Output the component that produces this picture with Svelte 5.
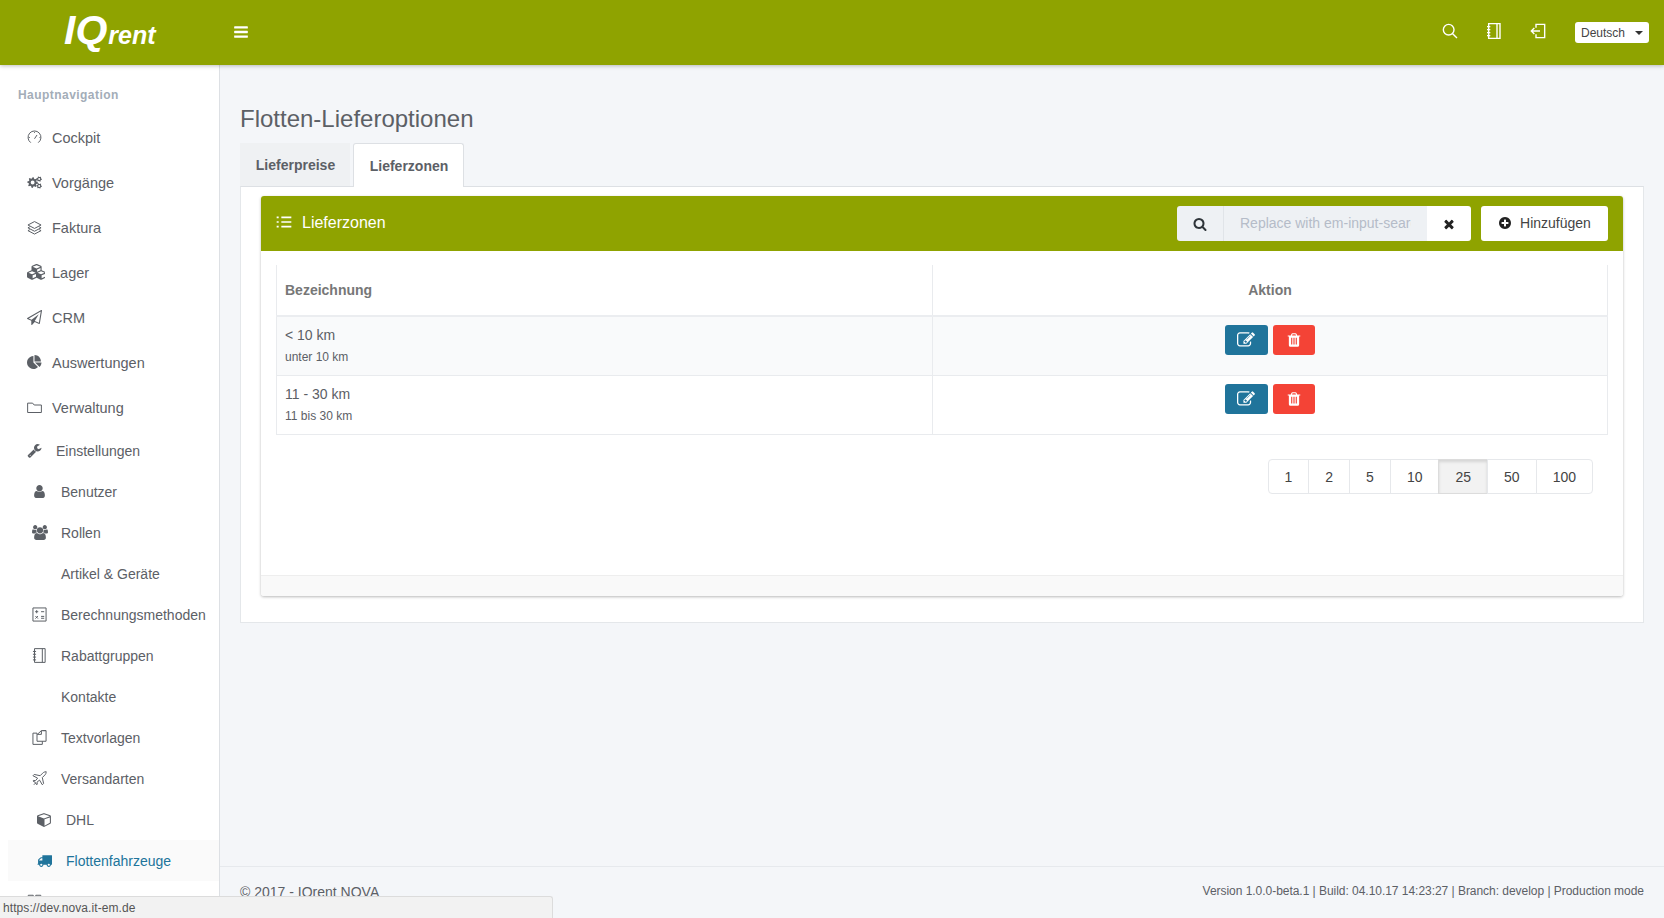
<script>
  // builds a small cog as one path, the hole is cut with evenodd
  function gear(cx, cy, r, teeth) {
    let d = ''
    const step = (Math.PI * 2) / (teeth * 4)
    for (let i = 0; i < teeth * 4; i++) {
      const rad = i % 4 < 2 ? r : r * 0.74
      const x = cx + Math.cos(i * step) * rad
      const y = cy + Math.sin(i * step) * rad
      d += (i ? 'L' : 'M') + x.toFixed(2) + ' ' + y.toFixed(2)
    }
    const h = r * 0.36
    return `${d}Z M${cx - h} ${cy}a${h} ${h} 0 1 0 ${h * 2} 0a${h} ${h} 0 1 0 ${-h * 2} 0Z`
  }

  const fa = 1792
  const icons = {
    speedo: { vb: 24, line: true, d: 'M6 20.2A10.3 10.3 0 1 1 18 20.2M12 14l4-6M3 12h1.500M20 12h1M12 3v1.500' },
    gears: { vb: 24, d: gear(9, 12, 8.6, 8) + gear(19.5, 6.5, 4.4, 6) + gear(19.5, 17.5, 4.4, 6) },
    layers: { vb: 24, line: true, d: 'M12 2.500 22.500 8 12 13.500 1.500 8ZM4.500 11 1.500 12.500 12 18 22.500 12.500 19.500 11M4.500 15.500 1.500 17 12 22.500 22.500 17 19.500 15.500' },
    cubes: { vb: 2048, d: 'M640 1632l384-192v-314l-384 164v342zm-64-454l404-173-404-173-404 173zm1088 454l384-192v-314l-384 164v342zm-64-454l404-173-404-173-404 173zm-448-293l384-165v-266l-384 164v267zm-64-379l441-189-441-189-441 189zm1088 518v416q0 36-19 67t-52 47l-448 224q-25 14-57 14t-57-14l-448-224q-4-2-7-4-2 2-7 4l-448 224q-25 14-57 14t-57-14l-448-224q-33-16-52-47t-19-67v-416q0-38 21.500-70t56.500-48l434-186v-400q0-38 21.500-70t56.500-48l448-192q23-10 50-10t50 10l448 192q35 16 56.500 48t21.500 70v400l434 186q36 16 57 48t21 70z' },
    plane: { vb: fa, d: 'M1764 11q33 24 27 64l-256 1536q-5 29-32 45-14 8-31 8-11 0-24-5l-527-215-298 327q-18 21-47 21-14 0-23-4-19-7-30-23.500t-11-36.500v-452l-472-193q-37-14-40-55-3-39 32-59l1664-960q35-21 68 2zm-342 1499l221-1323-1434 827 336 137 863-639-478 797z' },
    pie: { vb: fa, d: 'M768 890l546 546q-106 108-247.500 168t-298.500 60q-209 0-385.500-103t-279.500-279.500-103-385.500 103-385.500 279.500-279.500 385.500-103v762zm187 6h773q0 157-60 298.500t-168 247.500zm709-128h-768v-768q209 0 385.500 103t279.500 279.500 103 385.500z' },
    folder: { vb: 24, line: true, d: 'M1 20V5h8l2.500 3H23v12Z' },
    wrench: { vb: fa, d: 'M448 1472q0-26-19-45t-45-19-45 19-19 45 19 45 45 19 45-19 19-45zm644-420l-682 682q-37 37-90 37-52 0-91-37l-106-108q-38-36-38-90 0-53 38-91l681-681q39 98 114.500 173.500t173.500 114.500zm634-435q0 39-23 106-47 134-164.500 217.500t-258.500 83.500q-185 0-316.500-131.500t-131.500-316.500 131.500-316.500 316.500-131.500q58 0 121.500 16.500t107.500 46.500q16 11 16 28t-16 28l-293 169v224l193 107q5-3 79-48.500t135.500-81 70.500-35.500q15 0 23.500 10t8.500 25z' },
    user: { vb: fa, d: 'M1536 1399q0 109-62.500 187t-150.500 78h-854q-88 0-150.500-78t-62.500-187q0-85 8.500-160.500t31.500-152 58.500-131 94-89 134.500-34.500q131 128 313 128t313-128q76 0 134.500 34.500t94 89 58.500 131 31.500 152 8.500 160.500zm-256-887q0 159-112.500 271.500t-271.500 112.500-271.500-112.500-112.500-271.500 112.500-271.500 271.500-112.500 271.500 112.500 112.500 271.500z' },
    users: { vb: 1920, d: 'M593 896q-162 5-265 128h-134q-82 0-138-40.500t-56-118.500q0-353 124-353 6 0 43.500 21t97.500 42.500 119 21.500q67 0 133-23-5 37-5 66 0 139 81 256zm1071 637q0 120-73 189.500t-194 69.500h-874q-121 0-194-69.500t-73-189.500q0-53 3.500-103.500t14-109 26.500-108.500 43-97.500 62-81 85.500-53.500 111.500-20q10 0 43 21.500t73 48 107 48 135 21.500 135-21.500 107-48 73-48 43-21.500q61 0 111.500 20t85.500 53.500 62 81 43 97.500 26.500 108.500 14 109 3.500 103.500zm-1024-1277q0 106-75 181t-181 75-181-75-75-181 75-181 181-75 181 75 75 181zm704 384q0 159-112.500 271.500t-271.500 112.500-271.500-112.500-112.500-271.500 112.500-271.500 271.500-112.500 271.500 112.500 112.500 271.500zm576 225q0 78-56 118.500t-138 40.500h-134q-103-123-265-128 81-117 81-256 0-29-5-66 66 23 133 23 59 0 119-21.500t97.500-42.500 43.500-21q124 0 124 353zm-128-609q0 106-75 181t-181 75-181-75-75-181 75-181 181-75 181 75 75 181z' },
    calc: { vb: 24, line: true, d: 'M1.500 1.500h21v21h-21ZM5 7.500h5M7.500 5v5M14.500 7.500h5M5.500 14.500l4 4M9.500 14.500l-4 4M14.500 15h5M14.500 18h5' },
    notebook: { vb: 24, line: true, d: 'M4 1h17v22H4ZM16.500 1v22M1.500 5.500h5M1.500 10h5M1.500 14.500h5M1.500 19h5' },
    docs: { vb: 24, line: true, d: 'M8 5H1.500v18h15v-5M8 5v13h14.500V1H15M15 1v6H8.500L15 1M17 1h5.500' },
    jet: { vb: 24, line: true, d: 'M22.500 1.500c-2-.5-4 .5-5.500 2L13 7.500 3.500 5.500 1.500 7.500 9 11.500 5.500 15.500 2.500 15 1.500 16 5 18 7.500 22 8.500 21 8 18l4-3.500 4.500 7.500 2-2-2-9.500 4-4c1.500-1.500 2.500-3.500 2-5.500ZM3 22l3-3' },
    cube: { vb: fa, d: 'M896 1629l640-349v-636l-640 233v752zm-64-865l698-254-698-254-698 254zm832-252v768q0 35-18 65t-49 47l-704 384q-28 16-61 16t-61-16l-704-384q-31-17-49-47t-18-65v-768q0-40 23-73t61-47l704-256q22-8 44-8t44 8l704 256q38 14 61 47t23 73z' },
    truck: { vb: fa, d: 'M640 1408q0-52-38-90t-90-38-90 38-38 90 38 90 90 38 90-38 38-90zm-384-512h384v-256h-158q-13 0-22 9l-195 195q-9 9-9 22v30zm1280 512q0-52-38-90t-90-38-90 38-38 90 38 90 90 38 90-38 38-90zm256-1088v1024q0 15-4 26.500t-13.500 18.500-16.500 11.500-23.500 6-22.500 2-25.500 0-22.500-.5q0 106-75 181t-181 75-181-75-75-181h-384q0 106-75 181t-181 75-181-75-75-181h-64q-3 0-22.500.5t-25.500 0-22.500-2-23.500-6-16.500-11.500-13.500-18.500-4-26.500q0-26 19-45t45-19v-320q0-8-.5-35t0-38 2.500-34.500 6.500-37 14-30.500 22.500-30l198-198q19-19 50.500-32t58.500-13h160v-192q0-26 19-45t45-19h1024q26 0 45 19t19 45z' },
    grid: { vb: 24, line: true, d: 'M2 2h8v8H2ZM14 2h8v8h-8ZM2 14h8v8H2ZM14 14h8v8h-8Z' },
    bars: { vb: fa, d: 'M1664 1344v128q0 26-19 45t-45 19h-1408q-26 0-45-19t-19-45v-128q0-26 19-45t45-19h1408q26 0 45 19t19 45zm0-512v128q0 26-19 45t-45 19h-1408q-26 0-45-19t-19-45v-128q0-26 19-45t45-19h1408q26 0 45 19t19 45zm0-512v128q0 26-19 45t-45 19h-1408q-26 0-45-19t-19-45v-128q0-26 19-45t45-19h1408q26 0 45 19t19 45z' },
    magnifier: { vb: 24, line: true, d: 'M16 16l6.500 6.500M18 10A8 8 0 1 1 2 10a8 8 0 1 1 16 0Z' },
    logout: { vb: 24, line: true, d: 'M9 7V2h13v20H9v-5M15 12H2M6.500 7.500 2 12l4.500 4.500' },
    list: { vb: 24, line: true, d: 'M8 5h15M8 12h15M8 19h15M1 5h3M1 12h3M1 19h3' },
    search: { vb: fa, d: 'M1216 832q0-185-131.500-316.500t-316.500-131.500-316.500 131.500-131.500 316.500 131.500 316.500 316.500 131.500 316.500-131.500 131.500-316.500zm512 832q0 52-38 90t-90 38q-54 0-90-38l-343-342q-179 124-399 124-143 0-273.500-55.500t-225-150-150-225-55.500-273.500 55.500-273.500 150-225 225-150 273.500-55.500 273.500 55.500 225 150 150 225 55.500 273.500q0 220-124 399l343 343q37 37 37 90z' },
    times: { vb: fa, d: 'M1490 1322q0 40-28 68l-136 136q-28 28-68 28t-68-28l-294-294-294 294q-28 28-68 28t-68-28l-136-136q-28-28-28-68t28-68l294-294-294-294q-28-28-28-68t28-68l136-136q28-28 68-28t68 28l294 294 294-294q28-28 68-28t68 28l136 136q28 28 28 68t-28 68l-294 294 294 294q28 28 28 68z' },
    plus: { vb: fa, d: 'M1344 960v-128q0-26-19-45t-45-19h-256v-256q0-26-19-45t-45-19h-128q-26 0-45 19t-19 45v256h-256q-26 0-45 19t-19 45v128q0 26 19 45t45 19h256v256q0 26 19 45t45 19h128q26 0 45-19t19-45v-256h256q26 0 45-19t19-45zm320-64q0 209-103 385.500t-279.500 279.500-385.500 103-385.500-103-279.500-279.500-103-385.500 103-385.500 279.500-279.500 385.500-103 385.500 103 279.500 279.500 103 385.500z' },
    edit: { vb: fa, d: 'M888 1184l116-116-152-152-116 116v56h96v96h56zm440-720q-16-16-33 1l-350 350q-17 17-1 33t33-1l350-350q17-17 1-33zm80 594v190q0 119-84.500 203.500t-203.500 84.500h-832q-119 0-203.500-84.500t-84.500-203.500v-832q0-119 84.500-203.500t203.500-84.500h832q63 0 117 25 15 7 18 23 3 17-9 29l-49 49q-14 14-32 8-23-6-45-6h-832q-66 0-113 47t-47 113v832q0 66 47 113t113 47h832q66 0 113-47t47-113v-126q0-13 9-22l64-64q15-15 35-7t20 29zm-96-738l288 288-672 672h-288v-288zm444 132l-92 92-288-288 92-92q28-28 68-28t68 28l152 152q28 28 28 68t-28 68z' },
    trash: { vb: fa, d: 'M704 1376v-704q0-14-9-23t-23-9h-64q-14 0-23 9t-9 23v704q0 14 9 23t23 9h64q14 0 23-9t9-23zm256 0v-704q0-14-9-23t-23-9h-64q-14 0-23 9t-9 23v704q0 14 9 23t23 9h64q14 0 23-9t9-23zm256 0v-704q0-14-9-23t-23-9h-64q-14 0-23 9t-9 23v704q0 14 9 23t23 9h64q14 0 23-9t9-23zm-544-992h448l-48-117q-7-9-17-11h-317q-10 2-17 11zm928 32v64q0 14-9 23t-23 9h-96v948q0 83-47 143.500t-113 60.500h-832q-66 0-113-58.500t-47-141.500v-952h-96q-14 0-23-9t-9-23v-64q0-14 9-23t23-9h309l70-167q15-37 54-63t79-26h320q40 0 79 26t54 63l70 167h309q14 0 23 9t9 23z' }
  }

  const nav = [
    { label: 'Cockpit', icon: 'speedo', level: 'top' },
    { label: 'Vorgänge', icon: 'gears', level: 'top' },
    { label: 'Faktura', icon: 'layers', level: 'top' },
    { label: 'Lager', icon: 'cubes', level: 'top', size: 18 },
    { label: 'CRM', icon: 'plane', level: 'top' },
    { label: 'Auswertungen', icon: 'pie', level: 'top' },
    { label: 'Verwaltung', icon: 'folder', level: 'top' },
    { label: 'Einstellungen', icon: 'wrench', level: 'one' },
    { label: 'Benutzer', icon: 'user', level: 'two' },
    { label: 'Rollen', icon: 'users', level: 'two', size: 16 },
    { label: 'Artikel & Geräte', level: 'two' },
    { label: 'Berechnungsmethoden', icon: 'calc', level: 'two' },
    { label: 'Rabattgruppen', icon: 'notebook', level: 'two' },
    { label: 'Kontakte', level: 'two' },
    { label: 'Textvorlagen', icon: 'docs', level: 'two' },
    { label: 'Versandarten', icon: 'jet', level: 'two' },
    { label: 'DHL', icon: 'cube', level: 'three' },
    { label: 'Flottenfahrzeuge', icon: 'truck', level: 'three', active: true },
    { label: '', icon: 'grid', level: 'one' }
  ]

  const zones = [
    { name: '< 10 km', note: 'unter 10 km' },
    { name: '11 - 30 km', note: '11 bis 30 km' }
  ]

  const pages = [1, 2, 5, 10, 25, 50, 100]
  let pageSize = $state(25)
  let tab = $state('Lieferzonen')
</script>

{#snippet icon(name, size)}
  <svg
    class="icon"
    class:line={icons[name].line}
    width={size}
    height={size}
    viewBox="0 0 {icons[name].vb} {icons[name].vb}"
    aria-hidden="true"
  >
    <path d={icons[name].d} fill-rule="evenodd" />
  </svg>
{/snippet}

<div class="app">
  <header class="topbar">
    <div class="logo"><span class="logo-iq">IQ</span><span class="logo-rent">rent</span></div>
    <button class="burger">{@render icon('bars', 16)}</button>
    <div class="top-actions">
      <button class="top-btn">{@render icon('magnifier', 16)}</button>
      <button class="top-btn">{@render icon('notebook', 16)}</button>
      <button class="top-btn">{@render icon('logout', 16)}</button>
      <div class="lang">Deutsch<span class="caret"></span></div>
    </div>
  </header>

  <div class="below">
    <aside class="sidebar">
      <div class="nav-title">Hauptnavigation</div>
      {#each nav as item}
        <div class="nav-item {item.level}" class:active={item.active}>
          <span class="nav-icon">
            {#if item.icon}{@render icon(item.icon, item.size ?? 15)}{/if}
          </span>
          <span>{item.label}</span>
        </div>
      {/each}
    </aside>

    <main class="main">
      <div class="content">
        <h1>Flotten-Lieferoptionen</h1>

        <div class="tabs">
          {#each ['Lieferpreise', 'Lieferzonen'] as name}
            <button class="tab" class:current={tab === name} onclick={() => (tab = name)}>{name}</button>
          {/each}
        </div>

        <div class="pane">
          <section class="panel">
            <div class="panel-head">
              <div class="panel-title">{@render icon('list', 16)}<span>Lieferzonen</span></div>
              <div class="search">
                <span class="addon">{@render icon('search', 14)}</span>
                <input placeholder="Replace with em-input-search" />
                <button class="clear">{@render icon('times', 14)}</button>
              </div>
              <button class="add">{@render icon('plus', 14)}<span>Hinzufügen</span></button>
            </div>

            <div class="panel-body">
              <table>
                <thead>
                  <tr>
                    <th class="name">Bezeichnung</th>
                    <th>Aktion</th>
                  </tr>
                </thead>
                <tbody>
                  {#each zones as zone}
                    <tr>
                      <td>
                        <div class="zone-name">{zone.name}</div>
                        <small>{zone.note}</small>
                      </td>
                      <td class="actions">
                        <button class="act edit">{@render icon('edit', 18)}</button>
                        <button class="act del">{@render icon('trash', 16)}</button>
                      </td>
                    </tr>
                  {/each}
                </tbody>
              </table>

              <div class="pager">
                {#each pages as p}
                  <button class:on={p === pageSize} onclick={() => (pageSize = p)}>{p}</button>
                {/each}
              </div>
            </div>

            <div class="panel-foot"></div>
          </section>
        </div>
      </div>

      <footer class="footer">
        <span>© 2017 - IQrent NOVA</span>
        <span class="version">Version 1.0.0-beta.1 | Build: 04.10.17 14:23:27 | Branch: develop | Production mode</span>
      </footer>
    </main>
  </div>

  <div class="status">https://dev.nova.it-em.de</div>
</div>

<style>
  :global(body) {
    margin: 0;
    background: #f4f6f9;
    font-family: 'Liberation Sans', Arial, sans-serif;
    color: #5c6066;
    overflow: hidden;
  }

  button {
    font: inherit;
    cursor: pointer;
  }

  .app {
    position: relative;
    height: 918px;
    overflow: hidden;
  }

  .icon {
    display: block;
    fill: currentColor;
    flex: none;
  }

  .icon.line {
    fill: none;
    stroke: currentColor;
    stroke-width: 1.6;
  }

  .topbar {
    position: relative;
    z-index: 2;
    height: 65px;
    display: flex;
    align-items: center;
    background: #8fa300;
    box-shadow: 0 1px 4px rgba(0, 0, 0, 0.25);
    color: #fff;
  }

  .logo {
    width: 233px;
    box-sizing: border-box;
    padding: 3px 0 0 64px;
    font-style: italic;
    color: #fff;
    white-space: nowrap;
    line-height: 40px;
  }

  .logo-iq {
    font-size: 41px;
    font-weight: 700;
  }

  .logo-rent {
    font-size: 25px;
    font-weight: 700;
    margin-left: 1px;
  }

  .burger,
  .top-btn {
    background: none;
    border: none;
    color: #fff;
    padding: 0;
  }

  .burger {
    margin-top: -2px;
  }

  .top-btn {
    margin-top: -3px;
  }

  .top-btn .icon.line {
    stroke-width: 2.1;
  }

  .top-actions {
    margin-left: auto;
    display: flex;
    align-items: center;
    gap: 28px;
    padding-right: 15px;
  }

  .lang {
    width: 74px;
    height: 21px;
    box-sizing: border-box;
    margin-left: 1px;
    padding-left: 6px;
    display: flex;
    align-items: center;
    background: #fff;
    border-radius: 3px;
    color: #444;
    font-size: 12px;
  }

  .caret {
    margin-left: auto;
    margin-right: 6px;
    border-top: 4px solid #333;
    border-left: 4px solid transparent;
    border-right: 4px solid transparent;
  }

  .below {
    display: flex;
    height: 853px;
  }

  .sidebar {
    width: 219px;
    flex: none;
    background: #fff;
    border-right: 1px solid #dde0e4;
    overflow: hidden;
  }

  .nav-title {
    padding: 23px 0 0 18px;
    height: 27px;
    font-size: 12px;
    font-weight: 700;
    letter-spacing: 0.45px;
    color: #a3adb8;
  }

  .nav-item {
    display: flex;
    align-items: center;
    font-size: 14px;
    color: #5c6066;
  }

  .nav-icon {
    width: 25px;
    flex: none;
    display: flex;
    color: #5c6066;
  }

  .top {
    height: 45px;
    padding-left: 27px;
    font-size: 14.500px;
  }

  .one {
    height: 41px;
    padding-left: 27px;
  }

  .one .nav-icon {
    width: 29px;
  }

  .two {
    height: 41px;
    padding-left: 32px;
  }

  .two .nav-icon {
    width: 29px;
  }

  .three {
    height: 41px;
    margin-left: 8px;
    padding-left: 29px;
  }

  .three .nav-icon {
    width: 29px;
  }

  .active {
    color: #20749b;
    background: #fafafa;
  }

  .active .nav-icon {
    color: #20749b;
  }

  .main {
    flex: 1;
    min-width: 0;
    display: flex;
    flex-direction: column;
  }

  .content {
    flex: 1;
    padding: 0 20px;
  }

  h1 {
    margin: 39px 0 10px;
    font-size: 24px;
    line-height: 29px;
    font-weight: 400;
    color: #5c6066;
  }

  .tabs {
    display: flex;
    gap: 3px;
    position: relative;
    z-index: 1;
  }

  .tab {
    width: 110px;
    height: 43px;
    padding: 0 0 0 1px;
    border: none;
    background: #eff1f3;
    color: #5c6066;
    font-size: 14px;
    font-weight: 700;
  }

  .tab.current {
    width: 111px;
    height: 44px;
    margin-bottom: -1px;
    background: #fff;
    border: 1px solid #dde0e4;
    border-bottom: none;
    border-radius: 3px 3px 0 0;
  }

  .pane {
    height: 437px;
    box-sizing: border-box;
    padding: 9px 20px 0;
    background: #fff;
    border: 1px solid #e4e7ea;
    border-top-color: #dde0e4;
  }

  .panel {
    height: 400px;
    display: flex;
    flex-direction: column;
    background: #fff;
    border-radius: 3px;
    box-shadow: 0 1px 3px rgba(0, 0, 0, 0.28);
  }

  .panel-head {
    height: 55px;
    flex: none;
    display: flex;
    align-items: center;
    padding: 0 15px;
    background: #8fa300;
    border-radius: 3px 3px 0 0;
    color: #fff;
  }

  .panel-title {
    display: flex;
    align-items: center;
    gap: 10px;
    font-size: 16px;
    margin: -2px auto 0 0;
  }

  .panel-title .icon {
    margin-top: -2px;
    stroke-width: 2.4;
  }

  .search {
    display: flex;
    height: 35px;
    border-radius: 3px;
    overflow: hidden;
  }

  .addon {
    width: 46px;
    display: flex;
    align-items: center;
    justify-content: center;
    background: #eef1f4;
    border-right: 1px solid #e0e4e8;
    color: #2f353a;
  }

  .search input {
    width: 203px;
    box-sizing: border-box;
    padding: 0 16px 2px;
    border: none;
    background: #eef1f4;
    font: inherit;
    font-size: 14px;
  }

  .search input::placeholder {
    color: #b5bcc8;
    opacity: 1;
  }

  .clear {
    width: 44px;
    display: flex;
    align-items: center;
    justify-content: center;
    padding: 0;
    border: none;
    background: #fff;
    color: #222;
  }

  .add {
    width: 127px;
    height: 35px;
    margin-left: 10px;
    display: flex;
    align-items: center;
    justify-content: center;
    gap: 8px;
    padding: 0 0 2px;
    border: none;
    border-radius: 3px;
    background: #fff;
    color: #444;
    font-size: 14px;
  }

  .add .icon {
    color: #222;
  }

  .panel-body {
    flex: 1;
    padding: 14px 15px 0;
  }

  table {
    width: 100%;
    border-collapse: collapse;
    table-layout: fixed;
    font-size: 14px;
  }

  th {
    height: 50px;
    padding: 0 8px;
    border-left: 1px solid #e9ebee;
    border-right: 1px solid #e9ebee;
    border-bottom: 2px solid #ebedf0;
    color: #777;
    font-size: 14px;
    font-weight: 700;
    text-align: center;
  }

  th.name {
    width: 639px;
    text-align: left;
  }

  td {
    height: 58px;
    padding: 0 8px;
    border: 1px solid #e9ebee;
    vertical-align: top;
  }

  tbody tr:nth-child(odd) {
    background: #f9fafb;
  }

  .zone-name {
    margin-top: 10px;
    font-size: 14px;
    line-height: 17px;
    color: #5c6066;
  }

  small {
    display: block;
    margin-top: 6px;
    font-size: 12px;
    line-height: 14px;
    color: #5c6066;
  }

  .actions {
    text-align: center;
  }

  .act {
    display: inline-flex;
    align-items: center;
    justify-content: center;
    height: 30px;
    margin-top: 8px;
    padding: 0;
    border: none;
    border-radius: 3px;
    color: #fff;
    vertical-align: top;
  }

  .edit {
    width: 43px;
    background: #20749b;
  }

  .del {
    width: 42px;
    margin-left: 2px;
    background: #f44336;
  }

  .pager {
    display: flex;
    justify-content: flex-end;
    margin: 24px 15px 0 0;
  }

  .pager button {
    height: 35px;
    padding: 0 16px;
    margin-left: -1px;
    background: #fff;
    border: 1px solid #e6e8eb;
    color: #444;
    font-size: 14px;
  }

  .pager button:first-child {
    border-radius: 4px 0 0 4px;
  }

  .pager button:last-child {
    border-radius: 0 4px 4px 0;
  }

  .pager .on {
    background: #f2f2f2;
    border-color: #dcdcdc;
    box-shadow: inset 0 2px 3px rgba(0, 0, 0, 0.12);
  }

  .panel-foot {
    height: 20px;
    flex: none;
    background: #f9f9f9;
    border-top: 1px solid #eeeeee;
    border-radius: 0 0 3px 3px;
  }

  .footer {
    height: 52px;
    flex: none;
    box-sizing: border-box;
    display: flex;
    justify-content: space-between;
    align-items: flex-start;
    padding: 17px 20px 0;
    border-top: 1px solid #e6e9ed;
    font-size: 14px;
    color: #5c6066;
  }

  .version {
    font-size: 12px;
    letter-spacing: -0.035px;
  }

  .status {
    position: absolute;
    left: 0;
    bottom: 0;
    width: 553px;
    height: 22px;
    box-sizing: border-box;
    padding: 4px 0 0 3px;
    background: #f2f2f2;
    border: 1px solid #dcdcdc;
    border-left: none;
    border-bottom: none;
    border-radius: 0 3px 0 0;
    font-size: 12px;
    letter-spacing: 0.08px;
    color: #555;
  }
</style>
